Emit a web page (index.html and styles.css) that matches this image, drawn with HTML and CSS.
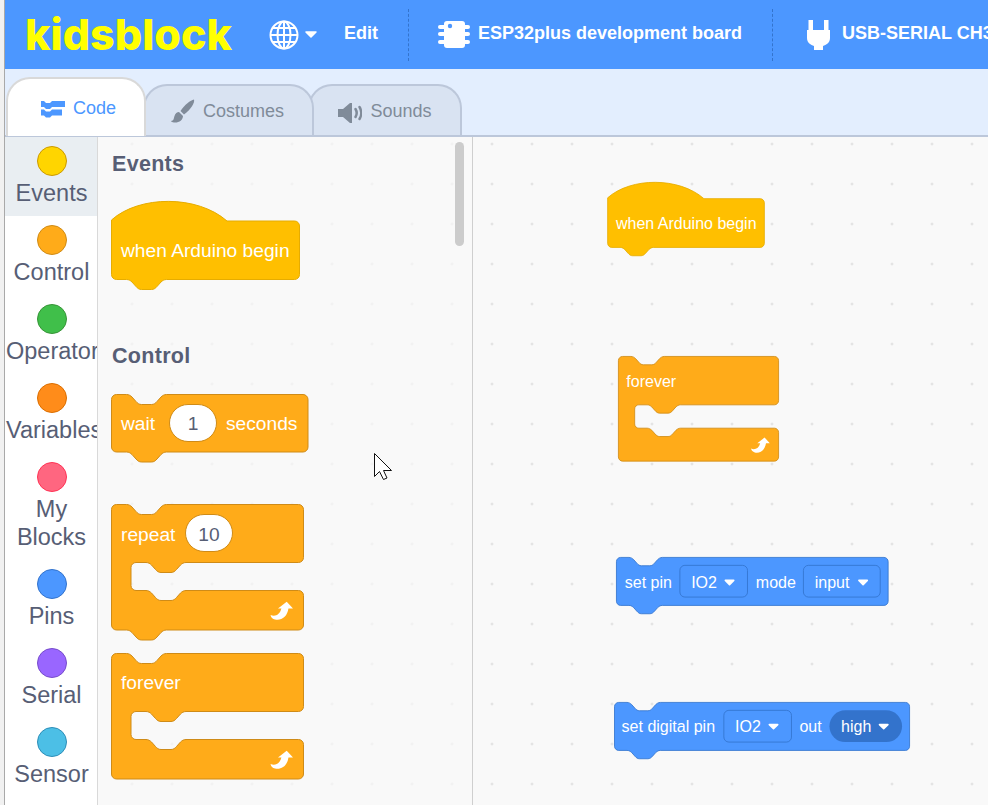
FILE: index.html
```html
<!DOCTYPE html>
<html lang="en">
<head>
<meta charset="utf-8">
<title>kidsblock</title>
<link rel="stylesheet" href="styles.css">
</head>
<body>
<svg class="defs" aria-hidden="true">
  <defs>
    <g id="loop">
      <path d="M159.5 111 C164 113 169 111 170.5 104 H177.5 C176.5 113 170 117 164 115.5 C161.5 115 160 113.5 159.5 111 Z"/>
      <path d="M175.7 97.7 L182 104.5 H167 Z"/>
    </g>
    <path id="hat" d="M0.5 19 c28 -25 86 -25 115.5 1 H183.5 a5 5 0 0 1 5 5 V73.5 a5 5 0 0 1 -5 5 H55.5 c-2.5 0 -4 1.2 -5.5 2.5 l-4 4.5 c-1.500 1.700 -3 3 -5.500 3 h-10 c-2.500 0 -4 -1.300 -5.500 -3 l-4 -4.500 c-1.500 -1.300 -3 -2.500 -5.500 -2.500 H5.500 a5 5 0 0 1 -5 -5 Z"/>
    <path id="forever" d="M0.5 5.5 a5 5 0 0 1 5 -5 H15.5 c2.5 0 4 1.2 5.5 2.5 l4 4.5 c1.5 1.7 3 3 5.5 3 h10 c2.5 0 4 -1.3 5.5 -3 l4 -4.5 c1.5 -1.3 3 -2.5 5.5 -2.5 H187.5 a5 5 0 0 1 5 5 V53.5 a5 5 0 0 1 -5 5 H75 c-2.5 0 -4 1.2 -5.5 2.5 l-4 4.5 c-1.5 1.7 -3 3 -5.5 3 h-10 c-2.5 0 -4 -1.3 -5.5 -3 l-4 -4.5 c-1.5 -1.3 -3 -2.5 -5.5 -2.5 H25 a5 5 0 0 0 -5 5 V81.5 a5 5 0 0 0 5 5 H35 c2.5 0 4 1.2 5.5 2.5 l4 4.5 c1.5 1.7 3 3 5.5 3 h10 c2.5 0 4 -1.3 5.5 -3 l4 -4.5 c1.5 -1.3 3 -2.5 5.5 -2.5 H187.5 a5 5 0 0 1 5 5 V121 a5 5 0 0 1 -5 5 H5.5 a5 5 0 0 1 -5 -5 Z"/>
    <path id="repeat" d="M0.5 5.5 a5 5 0 0 1 5 -5 H15.5 c2.5 0 4 1.2 5.5 2.5 l4 4.5 c1.5 1.7 3 3 5.5 3 h10 c2.5 0 4 -1.3 5.5 -3 l4 -4.5 c1.5 -1.3 3 -2.5 5.5 -2.5 H187.5 a5 5 0 0 1 5 5 V53.5 a5 5 0 0 1 -5 5 H75 c-2.5 0 -4 1.2 -5.5 2.5 l-4 4.5 c-1.5 1.7 -3 3 -5.5 3 h-10 c-2.5 0 -4 -1.3 -5.5 -3 l-4 -4.5 c-1.5 -1.3 -3 -2.5 -5.5 -2.5 H25 a5 5 0 0 0 -5 5 V81.5 a5 5 0 0 0 5 5 H35 c2.5 0 4 1.2 5.5 2.5 l4 4.5 c1.5 1.7 3 3 5.5 3 h10 c2.5 0 4 -1.3 5.5 -3 l4 -4.5 c1.5 -1.3 3 -2.5 5.5 -2.5 H187.5 a5 5 0 0 1 5 5 V121 a5 5 0 0 1 -5 5 H55.5 c-2.5 0 -4 1.2 -5.5 2.5 l-4 4.5 c-1.5 1.7 -3 3 -5.5 3 h-10 c-2.5 0 -4 -1.3 -5.5 -3 l-4 -4.5 c-1.5 -1.3 -3 -2.5 -5.5 -2.5 H5.5 a5 5 0 0 1 -5 -5 Z"/>
  </defs>
</svg>
<div class="edge"></div>
<div class="app">
  <header class="menu">
    <span class="logo">kidsblock</span>
    <span class="lang">
      <svg class="globe" viewBox="0 0 30 30"><g fill="none" stroke="#fff" stroke-width="2"><circle cx="15" cy="15" r="13.5"/><ellipse cx="15" cy="15" rx="6.5" ry="13.5"/><path d="M15 1.5 V28.5 M1.5 15 H28.5 M3.5 8 H26.5 M3.5 22 H26.5"/></g></svg>
      <svg class="menu-caret" viewBox="0 0 12 7"><path d="M1 1 h10 l-5 5 z" fill="#fff" stroke="#fff" stroke-width="1.5" stroke-linejoin="round"/></svg>
    </span>
    <span class="menu-text edit">Edit</span>
    <span class="divider"></span>
    <span class="menu-item">
      <svg class="chip" viewBox="0 0 32 28"><g fill="#fff"><rect x="6" y="0" width="21" height="27" rx="3"/><rect x="0" y="4" width="32" height="4" rx="2"/><rect x="0" y="11" width="32" height="4" rx="2"/><rect x="0" y="19" width="32" height="4" rx="2"/></g><circle cx="12" cy="5" r="2.2" fill="#4c97ff"/></svg>
      <span class="menu-text">ESP32plus development board</span>
    </span>
    <span class="divider"></span>
    <span class="menu-item">
      <svg class="plug" viewBox="0 0 23 30"><path fill="#fff" d="M1.5 0 h4.5 v10 h11 v-10 h4.5 v10 h1.5 v8 c0 5 -4 7 -7 8 v4 h-9 v-4 c-3 -1 -7 -3 -7 -8 v-8 h1.5 z"/></svg>
      <span class="menu-text">USB-SERIAL CH340</span>
    </span>
  </header>

  <nav class="tabs">
    <div class="tab tab-code">
      <svg class="tab-icon" viewBox="0 0 24 17"><path fill="#4c97ff" d="M0 0 h3 l2 2 h4 l2 -2 h13 v6 h-13 l-2 2 h-4 l-2 -2 h-3 z M0 8.5 h3 l2 2 h4 l2 -2 h10 v6 h-10 l-2 2 h-4 l-2 -2 h-3 z"/></svg>
      <span>Code</span>
    </div>
    <div class="tab tab-costumes">
      <svg class="tab-icon" viewBox="0 0 24 24"><g fill="#808b99"><path d="M23 0.5 c1 3 -3 10 -10 15 l-3.5 -3.5 c4 -6 10 -11 13.500 -11.500 z"/><path d="M8 13 l4 4 c0 4 -4 7 -9 6.500 c-2 -0.200 -3 -1 -3 -1.500 c3 -0.500 2.500 -2 3.500 -5 c0.800 -2.500 2.500 -4 4.500 -4 z"/></g></svg>
      <span>Costumes</span>
    </div>
    <div class="tab tab-sounds">
      <svg class="tab-icon" viewBox="0 0 24 20"><path fill="#808b99" d="M0 6 h5 l7 -6 h2 v20 h-2 l-7 -6 h-5 z"/><path fill="none" stroke="#808b99" stroke-width="2.500" stroke-linecap="round" d="M17.500 6 c1.500 2.500 1.500 5.500 0 8 M21.500 4 c2.200 3.500 2.200 8.500 0 12"/></svg>
      <span>Sounds</span>
    </div>
  </nav>

  <main class="editor">
    <aside class="categories">
      <div class="cat cat-active"><span class="dot dot-events"></span><span class="cat-label">Events</span></div>
      <div class="cat"><span class="dot dot-control"></span><span class="cat-label">Control</span></div>
      <div class="cat"><span class="dot dot-operators"></span><span class="cat-label">Operators</span></div>
      <div class="cat"><span class="dot dot-variables"></span><span class="cat-label">Variables</span></div>
      <div class="cat"><span class="dot dot-myblocks"></span><span class="cat-label">My Blocks</span></div>
      <div class="cat"><span class="dot dot-pins"></span><span class="cat-label">Pins</span></div>
      <div class="cat"><span class="dot dot-serial"></span><span class="cat-label">Serial</span></div>
      <div class="cat"><span class="dot dot-sensor"></span><span class="cat-label">Sensor</span></div>
    </aside>

    <section class="palette">
      <h2 class="heading">Events</h2>
      <svg class="block b-hat p-when" viewBox="0 0 189 90">
        <use href="#hat" class="s-hat"/>
        <text x="10" y="56" class="t">when Arduino begin</text>
      </svg>
      <h2 class="heading heading-control">Control</h2>
      <svg class="block b-wait p-wait" viewBox="0 0 198 69">
        <path class="s-ctl" d="M0.5 5.5 a5 5 0 0 1 5 -5 H15.5 c2.500 0 4 1.200 5.500 2.500 l4 4.500 c1.500 1.700 3 3 5.500 3 h10 c2.500 0 4 -1.300 5.500 -3 l4 -4.500 c1.500 -1.300 3 -2.500 5.500 -2.500 H192 a5 5 0 0 1 5 5 V53 a5 5 0 0 1 -5 5 H55.500 c-2.500 0 -4 1.200 -5.500 2.500 l-4 4.500 c-1.500 1.700 -3 3 -5.500 3 h-10 c-2.500 0 -4 -1.300 -5.500 -3 l-4 -4.500 c-1.500 -1.300 -3 -2.500 -5.500 -2.500 H5.500 a5 5 0 0 1 -5 -5 Z"/>
        <text x="10" y="36" class="t">wait</text>
        <rect x="58.500" y="10.500" width="47" height="37" rx="18.500" class="num"/>
        <text x="82" y="36" class="t t-num">1</text>
        <text x="115" y="36" class="t">seconds</text>
      </svg>
      <svg class="block b-c-notch p-repeat" viewBox="0 0 193 136">
        <use href="#repeat" class="s-ctl"/>
        <text x="10" y="37" class="t">repeat</text>
        <rect x="74.500" y="10.500" width="47" height="37" rx="18.500" class="num"/>
        <text x="98" y="37" class="t t-num">10</text>
        <use href="#loop" class="loop"/>
      </svg>
      <svg class="block b-c p-forever" viewBox="0 0 193 127">
        <use href="#forever" class="s-ctl"/>
        <text x="10" y="36" class="t">forever</text>
        <use href="#loop" class="loop"/>
      </svg>
      <div class="scrollbar"></div>
    </section>

    <section class="canvas">
      <svg class="block b-hat on-canvas c-when" viewBox="0 0 189 90">
        <use href="#hat" class="s-hat"/>
        <text x="10.500" y="56" class="t">when Arduino begin</text>
      </svg>
      <svg class="block b-c on-canvas c-forever" viewBox="0 0 193 127">
        <use href="#forever" class="s-ctl"/>
        <text x="10" y="37" class="t">forever</text>
        <use href="#loop" class="loop"/>
      </svg>
      <svg class="block on-canvas b-setpin c-setpin" viewBox="0 0 327 69">
        <path class="s-pin" d="M0.5 5.500 a5 5 0 0 1 5 -5 H15.500 c2.500 0 4 1.200 5.500 2.500 l4 4.500 c1.500 1.700 3 3 5.500 3 h10 c2.500 0 4 -1.300 5.500 -3 l4 -4.500 c1.500 -1.300 3 -2.500 5.500 -2.500 H321 a5 5 0 0 1 5 5 V53 a5 5 0 0 1 -5 5 H55.500 c-2.500 0 -4 1.200 -5.500 2.500 l-4 4.500 c-1.500 1.700 -3 3 -5.500 3 h-10 c-2.500 0 -4 -1.300 -5.500 -3 l-4 -4.500 c-1.500 -1.300 -3 -2.500 -5.500 -2.500 H5.500 a5 5 0 0 1 -5 -5 Z"/>
        <text x="10.500" y="37" class="t">set pin</text>
        <rect x="76.500" y="10" width="81" height="38" rx="6" class="field"/>
        <text x="90" y="37" class="t">IO2</text>
        <path class="caret" d="M131 28 h10 l-5 5 z"/>
        <text x="167.500" y="37" class="t">mode</text>
        <rect x="224.500" y="10" width="92" height="38" rx="6" class="field"/>
        <text x="238" y="37" class="t">input</text>
        <path class="caret" d="M291 28 h10 l-5 5 z"/>
      </svg>
      <svg class="block on-canvas b-digital c-digital" viewBox="0 0 355 69">
        <path class="s-pin" d="M0.5 5.500 a5 5 0 0 1 5 -5 H15.500 c2.500 0 4 1.200 5.500 2.500 l4 4.500 c1.500 1.700 3 3 5.500 3 h10 c2.500 0 4 -1.300 5.500 -3 l4 -4.500 c1.500 -1.300 3 -2.500 5.500 -2.500 H349 a5 5 0 0 1 5 5 V53 a5 5 0 0 1 -5 5 H55.500 c-2.500 0 -4 1.200 -5.500 2.500 l-4 4.500 c-1.500 1.700 -3 3 -5.500 3 h-10 c-2.500 0 -4 -1.300 -5.500 -3 l-4 -4.500 c-1.500 -1.300 -3 -2.500 -5.500 -2.500 H5.500 a5 5 0 0 1 -5 -5 Z"/>
        <text x="9" y="36" class="t">set digital pin</text>
        <rect x="131.500" y="10" width="81" height="38" rx="6" class="field"/>
        <text x="145" y="36" class="t">IO2</text>
        <path class="caret" d="M186 27 h10 l-5 5 z"/>
        <text x="222" y="36" class="t">out</text>
        <rect x="258" y="10" width="87" height="38" rx="19" class="pill"/>
        <text x="272" y="36" class="t">high</text>
        <path class="caret" d="M318 27 h10 l-5 5 z"/>
      </svg>
    </section>

    <svg class="cursor" viewBox="0 0 19 28"><path d="M0.5 0.500 V23.500 L5.500 18.500 L9.500 26.500 L13 25 L9.500 17.500 H17.500 Z" fill="#fff" stroke="#111" stroke-width="1"/></svg>
  </main>
</div>
</body>
</html>
```

FILE: styles.css
```css
* { box-sizing: border-box; }

html, body {
  margin: 0;
  height: 805px;
  overflow: hidden;
}

body {
  display: flex;
  font-family: "Liberation Sans", Arial, sans-serif;
  background: #fff;
}

.defs { position: absolute; width: 0; height: 0; }

.edge {
  width: 5px;
  flex: none;
  background: #f1f1f1;
  border-right: 1px solid #a9a9a9;
}

.app {
  flex: 1;
  min-width: 0;
  display: flex;
  flex-direction: column;
}

/* Menu bar */
.menu {
  height: 69px;
  flex: none;
  display: flex;
  align-items: center;
  padding-left: 20px;
  background: #4c97ff;
  color: #fff;
  white-space: nowrap;
  overflow: hidden;
}

.menu > * { flex: none; }

.logo {
  width: 208px;
  font-family: Inter, sans-serif;
  font-weight: 800;
  font-size: 43px;
  line-height: 1;
  color: #ffff00;
  margin-top: -1px;
}

.lang {
  display: flex;
  align-items: center;
  margin-left: 36px;
}

.globe { width: 30px; height: 30px; display: block; }
.menu-caret { width: 12px; height: 7px; margin-left: 6px; display: block; }

.menu-text {
  font-weight: 700;
  font-size: 18px;
  line-height: 22px;
}

.edit { margin-left: 27px; margin-top: -3px; }

.divider {
  width: 0;
  height: 52px;
  border-left: 1px dashed #3373cc;
  margin: 0 30px;
}

.menu-item {
  display: flex;
  align-items: center;
  margin-top: -3px;
}

.chip { width: 32px; height: 28px; margin: 3px 8px 0 -1px; display: block; }
.plug { width: 23px; height: 30px; margin: 3px 12px 0 4px; display: block; }

/* Tabs */
.tabs {
  height: 68px;
  flex: none;
  display: flex;
  align-items: flex-end;
  padding-left: 1px;
  background: #e3eefe;
  border-bottom: 2px solid #bcc7da;
}

.tab {
  position: relative;
  display: flex;
  align-items: center;
  justify-content: center;
  gap: 8px;
  font-size: 18px;
  color: #808b99;
  background: #d9e3f2;
  border: 2px solid #bcc7da;
  border-bottom: 0;
  border-radius: 24px 24px 0 0;
  height: 51px;
  margin-bottom: 0;
}

.tab-code {
  width: 140px;
  height: 59px;
  color: #4c97ff;
  background: #fff;
  border-color: #d9d9d9;
  z-index: 3;
  padding: 1px 0 0 5px;
  margin-bottom: -1px;
}

.tab-costumes { width: 171px; margin-left: -3px; z-index: 2; padding: 1px 2px 0 0; }
.tab-sounds { width: 154px; margin-left: -6px; z-index: 1; padding-top: 1px; }

.tab-icon { display: block; }
.tab-code .tab-icon { width: 24px; height: 17px; margin-top: 3px; }
.tab-costumes .tab-icon { width: 24px; height: 24px; }
.tab-sounds .tab-icon { width: 24px; height: 20px; margin-top: 3px; }

/* Editor */
.editor {
  position: relative;
  flex: 1;
  min-height: 0;
  display: flex;
}

.categories {
  width: 93px;
  flex: none;
  background: #fff;
  border-right: 1px solid #d9d9d9;
}

.cat {
  display: flex;
  flex-direction: column;
  padding: 9px 0 9px;
  color: #575e75;
  font-size: 23.5px;
  line-height: 28px;
}

.cat-active { background: #e9eef2; }

.dot {
  width: 30px;
  height: 30px;
  flex: none;
  align-self: center;
  margin-left: 2px;
  margin-bottom: 3px;
  border-radius: 50%;
  border: 1.5px solid;
}

.cat-label {
  display: block;
  padding-left: 1px;
  text-align: center;
  overflow: hidden;
}

.dot-events { background: #ffd500; border-color: #cc9900; }
.dot-control { background: #ffab19; border-color: #cf8b17; }
.dot-operators { background: #40bf4a; border-color: #389438; }
.dot-variables { background: #ff8c1a; border-color: #db6e00; }
.dot-myblocks { background: #ff6680; border-color: #ff3355; }
.dot-pins { background: #4c97ff; border-color: #3373cc; }
.dot-serial { background: #9966ff; border-color: #774dcb; }
.dot-sensor { background: #4cbfe6; border-color: #2e8eb8; }

.palette {
  position: relative;
  width: 375px;
  flex: none;
  padding: 14px 0 0 13px;
  background-color: #f9f9f9;
  background-image: radial-gradient(circle, #f2f2f2 1.2px, transparent 1.7px);
  background-size: 40px 40px;
  background-position: 14px -13px;
  border-right: 1px solid #cfcfcf;
  overflow: hidden;
}

.heading {
  margin: 0 0 0 1px;
  font-size: 21.5px;
  line-height: 26px;
  font-weight: 700;
  letter-spacing: 0.3px;
  color: #575e75;
}

.heading-control { margin-top: 52px; }

.scrollbar {
  position: absolute;
  left: 357px;
  top: 5px;
  width: 9px;
  height: 104px;
  border-radius: 5px;
  background: #cccccc;
}

.canvas {
  position: relative;
  flex: 1;
  min-width: 0;
  background-color: #f9f9f9;
  background-image: radial-gradient(circle, #e4e4e4 1.2px, transparent 1.7px);
  background-size: 40px 40px;
  background-position: -1px -13px;
  overflow: hidden;
}

/* Blocks */
.block { display: block; overflow: visible; }

.b-hat { width: 189px; height: 90px; }
.b-wait { width: 198px; height: 69px; }
.b-c-notch { width: 193px; height: 136px; }
.b-c { width: 193px; height: 127px; }

.p-when { margin-top: 24px; }
.p-wait { margin-top: 25px; }
.p-repeat { margin-top: 41px; }
.p-forever { margin-top: 13px; }

.on-canvas { position: absolute; }
.on-canvas.b-hat { width: 158px; height: 75px; }
.on-canvas.b-c { width: 161px; height: 106px; }
.b-setpin { width: 273px; height: 57.6px; }
.b-digital { width: 296.500px; height: 57.6px; }

.c-when { left: 134px; top: 45px; }
.c-forever { left: 145px; top: 219px; }
.c-setpin { left: 143px; top: 420px; }
.c-digital { left: 140.500px; top: 564.500px; }

.s-hat { fill: #ffbf00; stroke: #e6ac00; stroke-width: 1; }
.s-ctl { fill: #ffab19; stroke: #cf8b17; stroke-width: 1; }
.s-pin { fill: #4c97ff; stroke: #3373cc; stroke-width: 1; }

.t {
  font-family: "Liberation Sans", Arial, sans-serif;
  font-size: 19.2px;
  fill: #fff;
}

.t-num { fill: #575e75; text-anchor: middle; }

.num { fill: #fff; stroke: #cf8b17; stroke-width: 1; }
.field { fill: #4c97ff; stroke: #3373cc; stroke-width: 1; }
.pill { fill: #3373cc; }
.caret { fill: #fff; stroke: #fff; stroke-width: 2; stroke-linejoin: round; }

.loop { fill: #fff; }

.cursor {
  position: absolute;
  left: 369px;
  top: 316px;
  width: 19px;
  height: 28px;
}
```
